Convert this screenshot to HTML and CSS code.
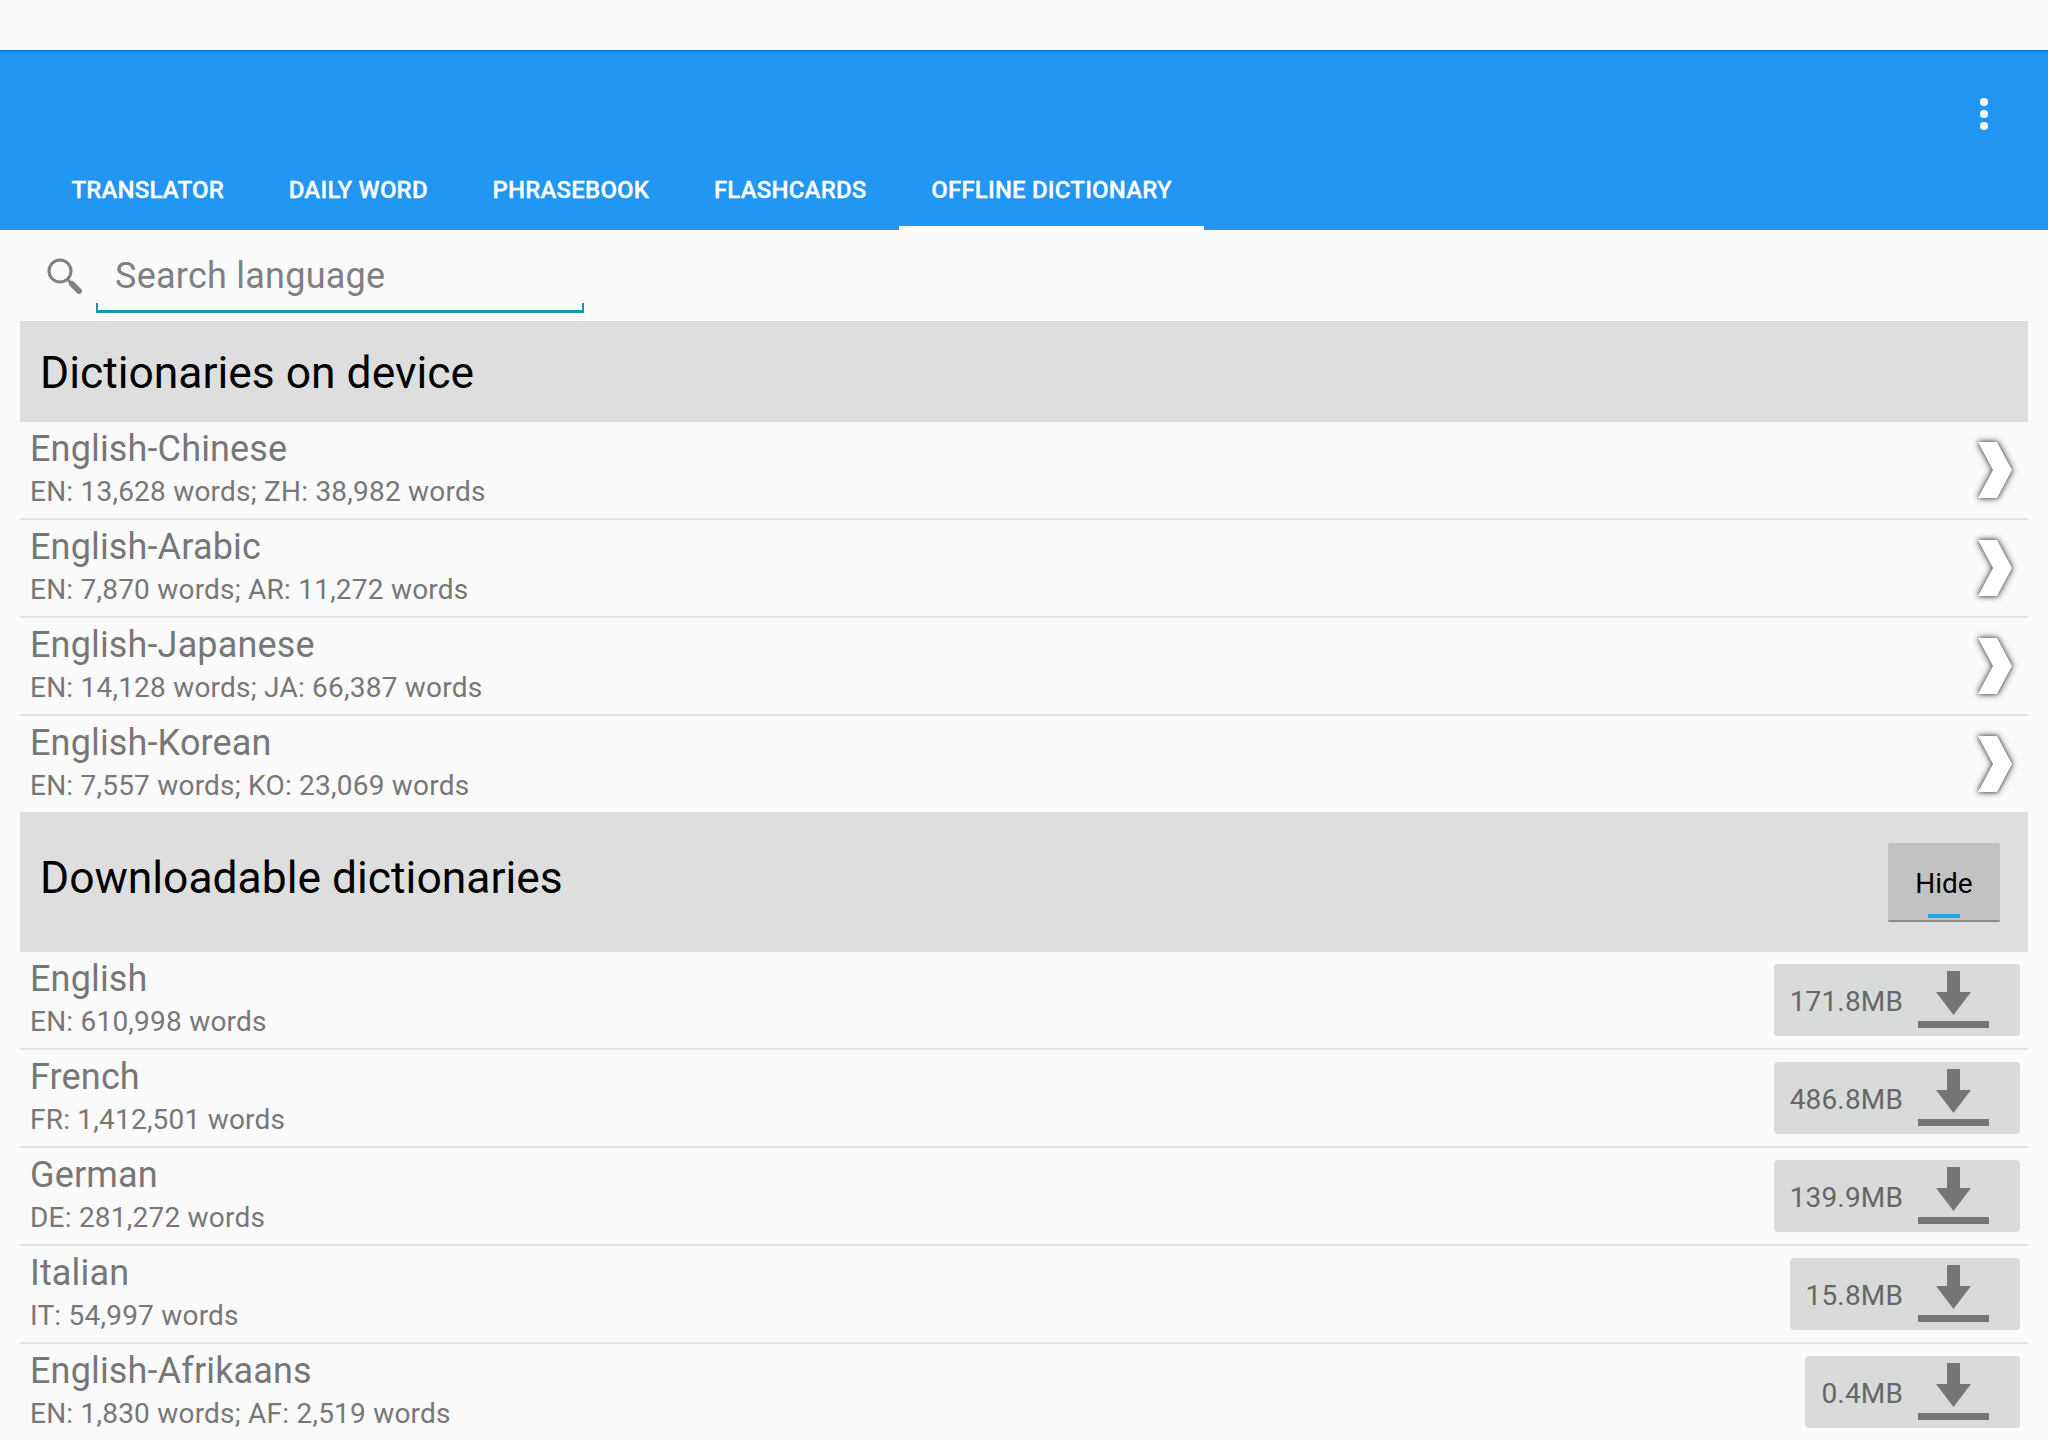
FILE: index.html
```html
<!DOCTYPE html>
<html lang="en">
<head>
<meta charset="utf-8">
<title>Offline dictionary</title>
<link rel="stylesheet" href="styles.css">
</head>
<body>
<svg class="defs" width="0" height="0" aria-hidden="true">
  <symbol id="chevron" viewBox="0 0 34 56"><path d="M0 0H19L34 28L19 56H0L15 28Z"/></symbol>
  <symbol id="download" viewBox="0 0 71 57"><path d="M29 0H42V21H53L35.500 44L18 21H29Z"/><rect x="0" y="50" width="71" height="7"/></symbol>
</svg>
<div class="status"></div>
<header class="appbar">
  <div class="toolbar">
    <div class="overflow"><i></i><i></i><i></i></div>
  </div>
  <nav class="tabs">
    <a class="tab">TRANSLATOR</a>
    <a class="tab">DAILY WORD</a>
    <a class="tab">PHRASEBOOK</a>
    <a class="tab">FLASHCARDS</a>
    <a class="tab active">OFFLINE DICTIONARY</a>
  </nav>
</header>
<main>
  <div class="search">
    <svg class="search-icon" viewBox="0 0 36 36"><circle cx="14" cy="13" r="11" fill="none" stroke="#808080" stroke-width="3"/><path d="M22 22L33 33" stroke="#808080" stroke-width="3"/><path d="M26 26L33 33" stroke="#808080" stroke-width="6" stroke-linecap="round"/></svg>
    <div class="search-field">Search language</div>
  </div>
  <section class="list">
    <h2 class="section-head">Dictionaries on device</h2>
    <div class="row"><div class="info"><div class="name">English-Chinese</div><div class="meta">EN: 13,628 words; ZH: 38,982 words</div></div><svg class="chevron"><use href="#chevron"/></svg></div>
    <div class="row"><div class="info"><div class="name">English-Arabic</div><div class="meta">EN: 7,870 words; AR: 11,272 words</div></div><svg class="chevron"><use href="#chevron"/></svg></div>
    <div class="row"><div class="info"><div class="name">English-Japanese</div><div class="meta">EN: 14,128 words; JA: 66,387 words</div></div><svg class="chevron"><use href="#chevron"/></svg></div>
    <div class="row last"><div class="info"><div class="name">English-Korean</div><div class="meta">EN: 7,557 words; KO: 23,069 words</div></div><svg class="chevron"><use href="#chevron"/></svg></div>
    <div class="section-head tall">
      <h2 class="section-title">Downloadable dictionaries</h2>
      <button class="hide">Hide</button>
    </div>
    <div class="row"><div class="info"><div class="name">English</div><div class="meta">EN: 610,998 words</div></div><div class="dl">171.8MB<svg class="dl-icon"><use href="#download"/></svg></div></div>
    <div class="row"><div class="info"><div class="name">French</div><div class="meta">FR: 1,412,501 words</div></div><div class="dl">486.8MB<svg class="dl-icon"><use href="#download"/></svg></div></div>
    <div class="row"><div class="info"><div class="name">German</div><div class="meta">DE: 281,272 words</div></div><div class="dl">139.9MB<svg class="dl-icon"><use href="#download"/></svg></div></div>
    <div class="row"><div class="info"><div class="name">Italian</div><div class="meta">IT: 54,997 words</div></div><div class="dl">15.8MB<svg class="dl-icon"><use href="#download"/></svg></div></div>
    <div class="row"><div class="info"><div class="name">English-Afrikaans</div><div class="meta">EN: 1,830 words; AF: 2,519 words</div></div><div class="dl">0.4MB<svg class="dl-icon"><use href="#download"/></svg></div></div>
  </section>
</main>
</body>
</html>
```
FILE: styles.css
```css
* { box-sizing: border-box; }
html, body { height: 1440px; overflow: hidden; }
body { margin: 0; background: #fafafa; font-family: Roboto, "Liberation Sans", sans-serif; color: #777; }
.defs { position: absolute; }
.status { height: 50px; background: #fafafa; }
.appbar { height: 180px; background: #2196f3; color: #fff; display: flex; flex-direction: column; border-top: 1px solid #1a78c4; box-shadow: inset 0 2px 2px -1px rgba(0,0,0,.15); }
.toolbar { height: 109px; display: flex; justify-content: flex-end; padding: 0 60px 0 0; }
.overflow { display: flex; flex-direction: column; gap: 4px; padding-top: 47px; }
.overflow i { display: block; width: 8px; height: 8px; border-radius: 50%; background: #fff; }
.tabs { flex: 1; display: flex; padding-left: 39px; }
.tab { padding: 0 32.400px 6px; display: flex; align-items: center; font-size: 24px; font-weight: 500; letter-spacing: .18px; -webkit-text-stroke: .3px #fff; height: 70px; border-bottom: 4px solid transparent; }
.tab.active { border-bottom-color: #fff; }
.search { height: 91px; display: flex; padding-left: 46px; align-items: flex-start; }
.search-icon { width: 36px; height: 36px; margin-top: 28px; }
.search-field { width: 488px; height: 83px; margin-left: 14px; padding: 24px 0 0 17px; font-size: 36px; line-height: 44px; letter-spacing: .25px; color: #808080; border: solid #1a95b0; border-width: 0 2px 3px; border-image: linear-gradient(to bottom, transparent 0 75px, #1a95b0 75px) 1; }
.list { margin: 0 20px; }
.section-head { margin: 0; height: 101px; background: #dedede; color: #000; font-size: 44.400px; font-weight: 400; line-height: 104px; padding-left: 20px; }
.section-head.tall { height: 140px; display: flex; justify-content: space-between; align-items: flex-start; padding-right: 28px; margin-top: -1px; }
.section-title { margin: 0; font-size: 44.400px; font-weight: 400; line-height: 132px; }
.hide { margin-top: 31px; width: 112px; height: 79px; border: 0; border-bottom: 2px solid #8c8c8c; background: #c2c2c2 linear-gradient(#1fa9e0,#1fa9e0) center bottom 2px / 32px 4px no-repeat; border-radius: 2px; font: 400 28px Roboto, sans-serif; color: #000; padding: 3px 0 0; }
.row { height: 98px; border-bottom: 2px solid #e2e2e2; display: flex; justify-content: space-between; align-items: center; padding: 0 8px 0 10px; }
.row.last { border-bottom-color: transparent; height: 97px; }
.info { display: flex; flex-direction: column; margin-top: -1px; }
.name { font-size: 36px; line-height: 44px; letter-spacing: .15px; }
.meta { font-size: 28px; line-height: 41px; letter-spacing: .22px; }
.chevron { width: 34px; height: 56px; margin-right: 8px; fill: #fff; overflow: visible; filter: drop-shadow(0 0 2px #555) drop-shadow(0 0 3px #888); }
.dl { height: 72px; display: flex; align-items: center; padding: 2px 31px 0 16px; gap: 15px; background: #d9dada; border-radius: 4px; font-size: 28px; letter-spacing: .16px; color: #666; }
.dl-icon { width: 71px; height: 57px; fill: #757575; margin-top: -4px; }
```
